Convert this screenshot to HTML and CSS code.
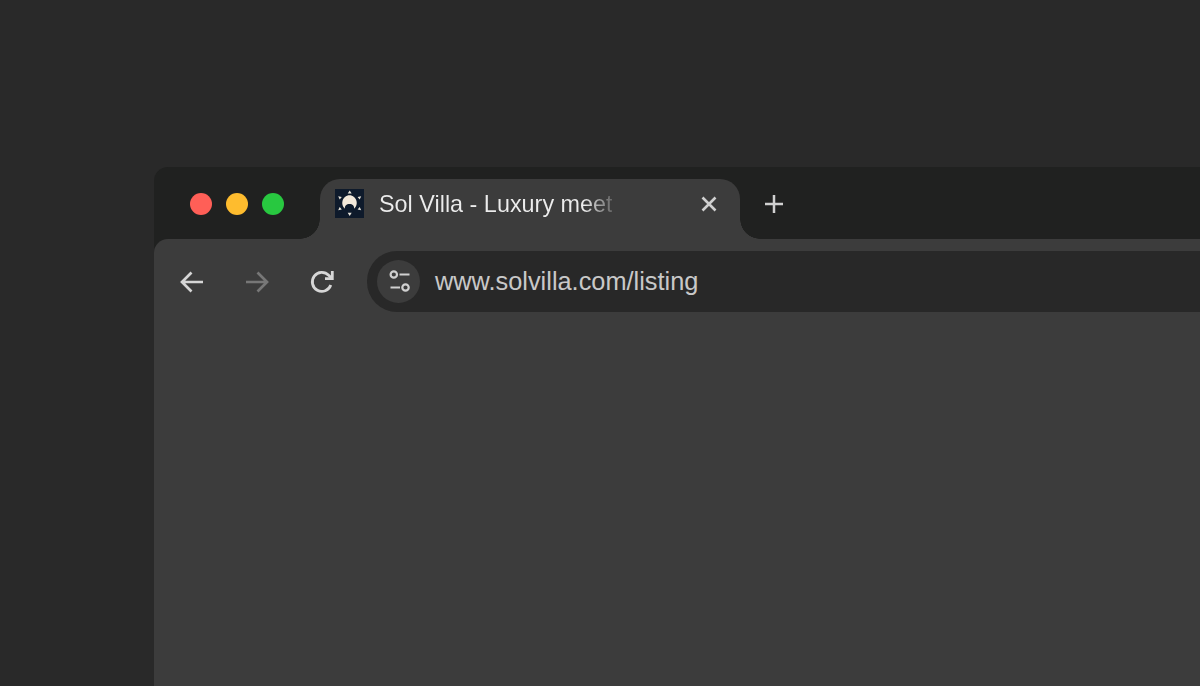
FILE: index.html
```html
<!DOCTYPE html>
<html lang="en">
<head>
<meta charset="utf-8">
<title>Sol Villa - Luxury meet</title>
<link rel="stylesheet" href="styles.css">
</head>
<body>
  <div class="window">
    <div class="tabstrip">
      <div class="lights">
        <span class="light red"></span>
        <span class="light yellow"></span>
        <span class="light green"></span>
      </div>
      <div class="tab">
        <svg class="favicon" viewBox="0 0 29 29">
          <rect width="29" height="29" fill="#0e1a2b"/>
          <path d="M10 19.700C7.400 17.500 6.800 14.500 7.500 12C8.400 8.800 11 6.300 14.500 6.300C18 6.300 20.600 8.800 21.500 12C22.200 14.500 21.600 17.500 19 19.700C19.500 17 17.500 15 14.500 15C11.500 15 9.500 17 10 19.700Z" fill="#f3e9da"/>
          <path d="M14.700 1.400 16.700 4.600 12.700 4.600Z M14.700 27 16.700 23.800 12.700 23.800Z M3.200 7.200 6.800 7.900 4.700 10.600Z M26.200 7.200 22.600 7.900 24.700 10.600Z M3.200 21.200 4.700 18 6.800 20.500Z M26.200 21.200 24.700 18 22.600 20.500Z" fill="#e8e4da"/>
        </svg>
        <span class="tab-title">Sol Villa - Luxury meet</span>
        <svg class="tab-close" viewBox="0 0 16 16">
          <path d="M1.500 1.500 14.500 14.500 M14.500 1.500 1.500 14.500" stroke="#d0d0d0" stroke-width="2.600" fill="none"/>
        </svg>
      </div>
      <svg class="new-tab" viewBox="0 0 20 20">
        <path d="M10 1V19 M1 10H19" stroke="#d0d0d0" stroke-width="2.500" fill="none"/>
      </svg>
    </div>
    <div class="chrome">
      <div class="toolbar">
        <svg class="nav back" viewBox="0 0 24 24">
          <path d="M23 12H2 M11.500 2.500 2 12 11.500 21.500" stroke="#d6d6d6" stroke-width="2.700" fill="none"/>
        </svg>
        <svg class="nav forward" viewBox="0 0 24 24">
          <path d="M1 12H22 M12.500 2.500 22 12 12.500 21.500" stroke="#777" stroke-width="2.700" fill="none"/>
        </svg>
        <svg class="nav reload" viewBox="0 0 24 24">
          <path d="M20.800 15A9.500 9.500 0 1 1 18.700 5.300L21.500 8" stroke="#d6d6d6" stroke-width="2.800" fill="none"/>
          <path d="M22.300 1V8.700H15" stroke="#d6d6d6" stroke-width="2.800" fill="none"/>
        </svg>
        <div class="omnibox">
          <div class="site-info">
            <svg viewBox="0 0 24 24">
              <circle cx="6.800" cy="4.500" r="3.200" stroke="#d0d0d0" stroke-width="2.200" fill="none"/>
              <circle cx="18.500" cy="17.500" r="3.200" stroke="#d0d0d0" stroke-width="2.200" fill="none"/>
              <path d="M12.500 4.500H22.500 M3.500 17.500H13" stroke="#d0d0d0" stroke-width="2.200" fill="none"/>
            </svg>
          </div>
          <span class="url">www.solvilla.com/listing</span>
        </div>
      </div>
    </div>
  </div>
</body>
</html>
```
FILE: styles.css
```css
* {
  margin: 0;
  padding: 0;
  box-sizing: border-box;
}
html, body {
  height: 100%;
  overflow: hidden;
}
body {
  background-color: #292929;
  font-family: "Liberation Sans", Arial, sans-serif;
  padding: 167px 0 0 154px;
}
.window {
  height: 100%;
  display: flex;
  flex-direction: column;
  background-color: #202120;
  border-radius: 14px 0 0 0;
}
.tabstrip {
  height: 72px;
  display: flex;
  align-items: flex-start;
  padding-top: 12px;
}
.lights {
  display: flex;
  gap: 14px;
  padding: 14px 0 0 36px;
  width: 166px;
}
.light {
  width: 22px;
  height: 22px;
  border-radius: 50%;
}
.red { background-color: #ff5f57; }
.yellow { background-color: #febc2e; }
.green { background-color: #28c840; }
.tab {
  position: relative;
  width: 420px;
  height: 60px;
  background-color: #3c3c3c;
  border-radius: 20px 20px 0 0;
  display: flex;
  align-items: flex-start;
  padding: 10px 0 0 15px;
}
/* flared corners at the foot of the tab */
.tab::before, .tab::after {
  content: "";
  position: absolute;
  bottom: 0;
  width: 20px;
  height: 20px;
}
.tab::before {
  left: -20px;
  background: radial-gradient(circle at 0 0, #202120 19.500px, #3c3c3c 20px);
}
.tab::after {
  right: -20px;
  background: radial-gradient(circle at 100% 0, #202120 19.500px, #3c3c3c 20px);
}
.favicon {
  width: 29px;
  height: 29px;
  flex-shrink: 0;
}
.tab-title {
  width: 233px;
  margin-left: 15px;
  font-size: 23.400px;
  line-height: 30px;
  white-space: nowrap;
  overflow: hidden;
  color: transparent;
  background: linear-gradient(to right, #ececec 88%, #666 100%);
  -webkit-background-clip: text;
  background-clip: text;
}
.tab-close {
  width: 16px;
  height: 16px;
  margin: 7px 0 0 89px;
}
.new-tab {
  width: 20px;
  height: 20px;
  margin: 15px 0 0 24px;
}
.chrome {
  flex: 1;
  background-color: #3c3c3c;
  border-radius: 14px 0 0 0;
}
.toolbar {
  height: 73px;
  display: flex;
  align-items: center;
  padding: 12px 0 0 26px;
}
.nav {
  width: 24px;
  height: 24px;
  flex-shrink: 0;
}
.forward { margin-left: 41px; }
.reload { margin-left: 41px; }
.omnibox {
  flex: 1;
  height: 61px;
  margin-left: 33px;
  background-color: #282828;
  border-radius: 30px 0 0 30px;
  display: flex;
  align-items: center;
  padding-left: 10px;
}
.site-info {
  width: 43px;
  height: 43px;
  border-radius: 50%;
  background-color: #3c3c3c;
  display: flex;
  justify-content: center;
  align-items: center;
}
.site-info svg {
  width: 24px;
  height: 24px;
}
.url {
  margin: 0 0 1px 15px;
  font-size: 25.350px;
  color: #c8c8c8;
}
```
